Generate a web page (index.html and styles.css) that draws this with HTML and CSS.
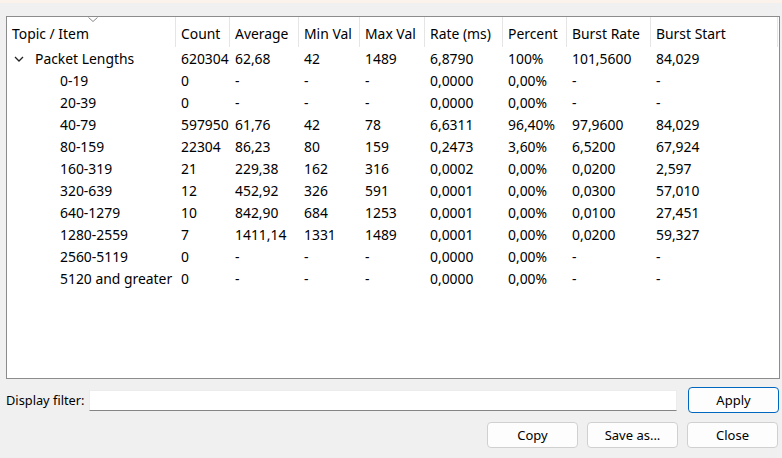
FILE: index.html
```html
<!DOCTYPE html>
<html>
<head>
<meta charset="utf-8">
<link rel="stylesheet" href="styles.css">
</head>
<body>
<div class="topstrip"></div>
<div class="dialog">
  <div class="tree">
    <div class="grid header">
      <div class="hc first">Topic / Item<svg class="sort" width="10" height="5" viewBox="0 0 10 5"><path d="M0.5 0.5 L5 4.5 L9.5 0.5" fill="none" stroke="#8a8a8a" stroke-width="1"/></svg></div>
      <div class="hc">Count</div>
      <div class="hc">Average</div>
      <div class="hc">Min Val</div>
      <div class="hc">Max Val</div>
      <div class="hc">Rate (ms)</div>
      <div class="hc">Percent</div>
      <div class="hc">Burst Rate</div>
      <div class="hc">Burst Start</div>
    </div>
    <div class="grid row">
      <div class="c parent"><svg class="chev" width="10" height="6" viewBox="0 0 10 6"><path d="M1 1 L5 5 L9 1" fill="none" stroke="#222" stroke-width="1.3"/></svg>Packet Lengths</div>
      <div class="c">620304</div><div class="c">62,68</div><div class="c">42</div><div class="c">1489</div><div class="c">6,8790</div><div class="c">100%</div><div class="c">101,5600</div><div class="c">84,029</div>
    </div>
    <div class="grid row">
      <div class="c child">0-19</div>
      <div class="c">0</div><div class="c">-</div><div class="c">-</div><div class="c">-</div><div class="c">0,0000</div><div class="c">0,00%</div><div class="c">-</div><div class="c">-</div>
    </div>
    <div class="grid row">
      <div class="c child">20-39</div>
      <div class="c">0</div><div class="c">-</div><div class="c">-</div><div class="c">-</div><div class="c">0,0000</div><div class="c">0,00%</div><div class="c">-</div><div class="c">-</div>
    </div>
    <div class="grid row">
      <div class="c child">40-79</div>
      <div class="c">597950</div><div class="c">61,76</div><div class="c">42</div><div class="c">78</div><div class="c">6,6311</div><div class="c">96,40%</div><div class="c">97,9600</div><div class="c">84,029</div>
    </div>
    <div class="grid row">
      <div class="c child">80-159</div>
      <div class="c">22304</div><div class="c">86,23</div><div class="c">80</div><div class="c">159</div><div class="c">0,2473</div><div class="c">3,60%</div><div class="c">6,5200</div><div class="c">67,924</div>
    </div>
    <div class="grid row">
      <div class="c child">160-319</div>
      <div class="c">21</div><div class="c">229,38</div><div class="c">162</div><div class="c">316</div><div class="c">0,0002</div><div class="c">0,00%</div><div class="c">0,0200</div><div class="c">2,597</div>
    </div>
    <div class="grid row">
      <div class="c child">320-639</div>
      <div class="c">12</div><div class="c">452,92</div><div class="c">326</div><div class="c">591</div><div class="c">0,0001</div><div class="c">0,00%</div><div class="c">0,0300</div><div class="c">57,010</div>
    </div>
    <div class="grid row">
      <div class="c child">640-1279</div>
      <div class="c">10</div><div class="c">842,90</div><div class="c">684</div><div class="c">1253</div><div class="c">0,0001</div><div class="c">0,00%</div><div class="c">0,0100</div><div class="c">27,451</div>
    </div>
    <div class="grid row">
      <div class="c child">1280-2559</div>
      <div class="c">7</div><div class="c">1411,14</div><div class="c">1331</div><div class="c">1489</div><div class="c">0,0001</div><div class="c">0,00%</div><div class="c">0,0200</div><div class="c">59,327</div>
    </div>
    <div class="grid row">
      <div class="c child">2560-5119</div>
      <div class="c">0</div><div class="c">-</div><div class="c">-</div><div class="c">-</div><div class="c">0,0000</div><div class="c">0,00%</div><div class="c">-</div><div class="c">-</div>
    </div>
    <div class="grid row">
      <div class="c child">5120 and greater</div>
      <div class="c">0</div><div class="c">-</div><div class="c">-</div><div class="c">-</div><div class="c">0,0000</div><div class="c">0,00%</div><div class="c">-</div><div class="c">-</div>
    </div>
  </div>
  <div class="filter">
    <span class="label">Display filter:</span>
    <div class="input"></div>
    <button class="btn default">Apply</button>
  </div>
  <div class="buttons">
    <button class="btn">Copy</button>
    <button class="btn">Save as...</button>
    <button class="btn">Close</button>
  </div>
</div>
</body>
</html>
```

FILE: styles.css
```css
html, body {
  margin: 0;
  padding: 0;
  background: #f0f0f0;
  font-family: "Noto Sans", "Open Sans", sans-serif;
  font-size: 13.9px;
  color: #000;
}
.topstrip {
  height: 3px;
  background: #fbf2ec;
}
.dialog {
  padding: 13px 3px 0 6px;
}
.tree {
  height: 363px;
  border: 1px solid #8c8c8c;
  background: #fff;
  box-sizing: border-box;
  width: 774px;
}
.grid {
  display: grid;
  grid-template-columns: 169px 54px 69px 61px 65px 78px 64px 84px 127px;
}
.header {
  height: 30px;
}
.hc {
  position: relative;
  border-right: 1px solid #e5e5e5;
  padding-left: 5px;
  padding-top: 2px;
  display: flex;
  align-items: center;
  white-space: nowrap;
}
.sort {
  position: absolute;
  left: 81px;
  top: 0;
}
.row {
  height: 22px;
}
.c {
  padding-left: 5px;
  padding-top: 1px;
  display: flex;
  align-items: center;
  white-space: nowrap;
}
.c.parent {
  padding-left: 7px;
}
.chev {
  margin-right: 11px;
}
.c.child {
  padding-left: 53px;
}
.filter {
  display: flex;
  align-items: center;
  height: 26px;
  margin-top: 8px;
}
.label {
  width: 83px;
  font-size: 12.8px;
}
.input {
  width: 586px;
  height: 19px;
  background: #fff;
  border: 1px solid #ececec;
  border-bottom: 1px solid #858585;
  margin-right: 11px;
}
.btn {
  width: 91px;
  height: 26px;
  box-sizing: border-box;
  background: #fdfdfd;
  border: 1px solid #d0d0d0;
  border-radius: 4px;
  font-family: "Noto Sans", "Open Sans", sans-serif;
  font-size: 13px;
  color: #000;
  padding: 0;
}
.btn.default {
  border-color: #0067c0;
}
.buttons {
  display: flex;
  justify-content: flex-end;
  gap: 9px;
  margin-top: 9px;
  padding-right: 1px;
}
```
